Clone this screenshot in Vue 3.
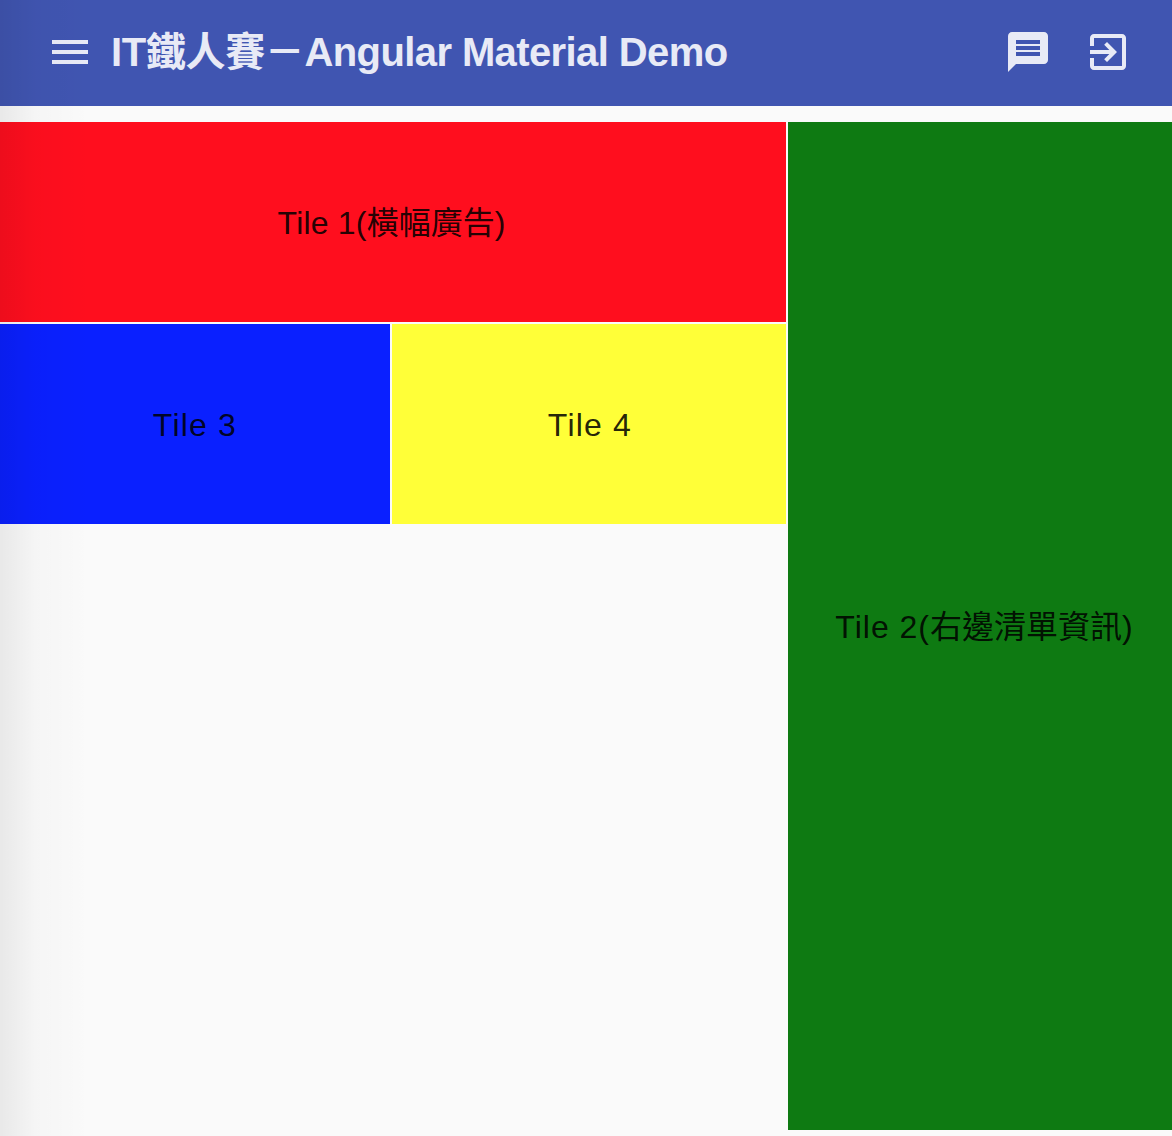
<script setup>
const tiles = [
  { latin: 'Tile 1(', rest: '橫幅廣告)', cls: 'red' },
  { latin: 'Tile 2(', rest: '右邊清單資訊)', cls: 'green' },
  { latin: 'Tile 3', rest: '', cls: 'blue' },
  { latin: 'Tile 4', rest: '', cls: 'yellow' },
]
</script>

<template>
  <div class="page">
    <header class="toolbar">
      <svg class="icon" viewBox="0 0 24 24"><path d="M3 18h18v-2H3v2zm0-5h18v-2H3v2zm0-7v2h18V6H3z" /></svg>
      <span class="title">IT鐵人賽－<span class="title-latin">Angular Material Demo</span></span>
      <span class="spacer"></span>
      <svg class="icon" viewBox="0 0 24 24"><path d="M20 2H4c-1.1 0-1.99.9-1.99 2L2 22l4-4h14c1.1 0 2-.9 2-2V4c0-1.1-.9-2-2-2zm-2 12H6v-2h12v2zm0-3H6V9h12v2zm0-3H6V6h12v2z" /></svg>
      <svg class="icon" viewBox="0 0 24 24"><path d="M10.09 15.59L11.5 17l5-5-5-5-1.41 1.41L12.67 11H3v2h9.67l-2.58 2.59zM19 3H5c-1.11 0-2 .9-2 2v4h2V5h14v14H5v-4H3v4c0 1.1.89 2 2 2h14c1.1 0 2-.9 2-2V5c0-1.1-.9-2-2-2z" /></svg>
    </header>
    <main class="grid">
      <div v-for="t in tiles" :key="t.cls" class="tile" :class="t.cls">
        <span><span class="latin">{{ t.latin }}</span>{{ t.rest }}</span>
      </div>
    </main>
    <div class="edge"></div>
  </div>
</template>

<style scoped>
.page {
  position: relative;
  height: 1136px;
  overflow: hidden;
  background: #fafafa;
  font-family: "Liberation Sans", "Noto Sans CJK TC", sans-serif;
}
.toolbar {
  display: flex;
  align-items: center;
  gap: 32px;
  height: 106px;
  padding: 0 40px 2px 46px;
  box-sizing: border-box;
  background: #4055b1;
  color: #e8eaf6;
}
.icon {
  width: 48px;
  height: 48px;
  flex: none;
  fill: #e8eaf6;
}
.title {
  margin-left: -15px;
  font-size: 40px;
  font-weight: 700;
  line-height: 48px;
  letter-spacing: -0.35px;
  white-space: nowrap;
}
.title-latin {
  letter-spacing: -0.6px;
}
.spacer {
  flex: 1;
}
.grid {
  display: grid;
  grid-template-columns: 390px 394px 384px;
  grid-template-rows: repeat(5, 200px);
  gap: 2px;
  margin-top: 16px;
}
.tile {
  display: flex;
  align-items: center;
  justify-content: center;
  font-size: 32px;
  color: rgba(0, 0, 0, 0.87);
  white-space: nowrap;
}
.latin {
  letter-spacing: 1.2px;
}
.red {
  grid-column: 1 / span 2;
  padding: 0 3px 4px 0;
  background: #ff0e1e;
}
.red .latin {
  letter-spacing: 0.2px;
}
.green {
  grid-column: 3;
  grid-row: 1 / span 5;
  padding: 0 0 4px 8px;
  background: #0e7a12;
}
.green .latin {
  letter-spacing: 1px;
}
.blue {
  padding-top: 2px;
  background: #0a20ff;
}
.yellow {
  padding: 2px 0 0 2px;
  background: #ffff38;
}
.edge {
  position: absolute;
  inset: 0 auto 0 0;
  width: 90px;
  pointer-events: none;
  background: linear-gradient(90deg, rgba(0, 0, 0, 0.07), rgba(0, 0, 0, 0.02) 40%, rgba(0, 0, 0, 0));
}
</style>
